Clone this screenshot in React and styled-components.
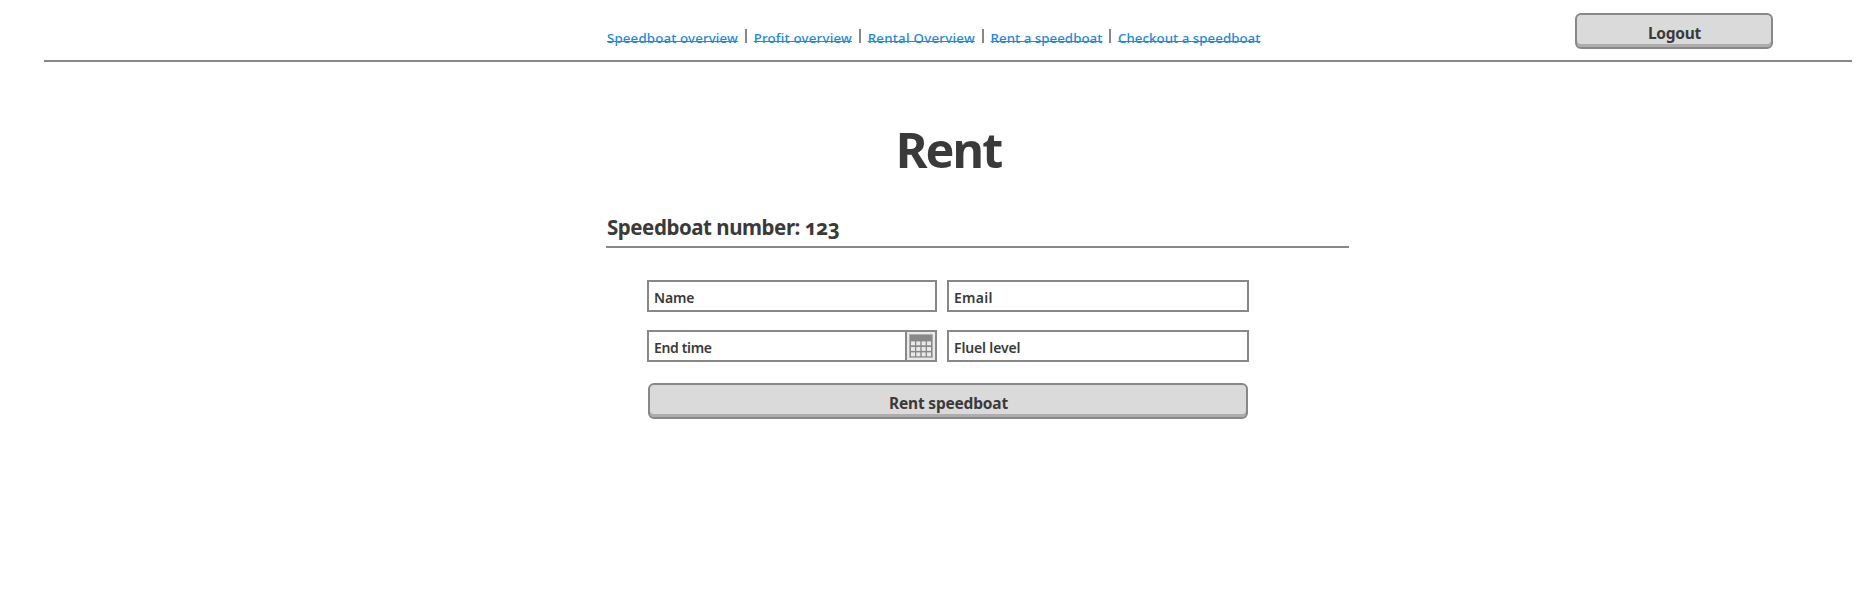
import React from "react";
import styled, { createGlobalStyle } from "styled-components";

const line = "#888888";
const ink = "#3a3a3a";

const GlobalStyle = createGlobalStyle`
  *, *::before, *::after { box-sizing: border-box; }
  body {
    margin: 0;
    background: #fff;
    color: ${ink};
    font-family: "Noto Sans", sans-serif;
    font-size: 14px;
  }
`;

const Page = styled.div`
  min-height: 600px;
  overflow: hidden;
`;

const Header = styled.header`
  display: flex;
  justify-content: space-between;
  align-items: flex-start;
  height: 62px;
  margin: 0 20px 0 44px;
  padding: 13px 79px 0 563px;
  border-bottom: 2px solid ${line};
`;

const Nav = styled.nav`
  display: flex;
  padding-top: 15px;
`;

const NavItem = styled.span`
  display: flex;
`;

const NavLink = styled.a`
  color: #2489dd;
  font-size: 13.3px;
  font-weight: 500;
  line-height: 20px;
  letter-spacing: ${(p) => p.$tracking}px;
  white-space: nowrap;
  text-decoration: underline;
  text-decoration-thickness: 1px;
  text-underline-offset: -2px;
  text-decoration-skip-ink: none;
`;

const Separator = styled.span`
  width: 2px;
  height: 14px;
  margin: 1px 7px 0 6.7px;
  background: ${line};
`;

const Button = styled.button`
  display: block;
  width: ${(p) => p.$width}px;
  height: 36px;
  padding: 4px 0 0 1px;
  border: 2px solid ${line};
  border-radius: 6px;
  background: #dadada;
  box-shadow: inset 0 -3px 0 #adadad;
  color: ${ink};
  font: 700 15.5px/28px "Noto Sans", sans-serif;
  letter-spacing: ${(p) => p.$tracking}px;
  text-align: center;
`;

const Main = styled.main`
  width: 743px;
  margin-left: 606px;
`;

const Title = styled.h1`
  width: 685px;
  margin: 57px 0 0;
  font-size: 48.5px;
  font-weight: 700;
  line-height: 60px;
  letter-spacing: -1.9px;
  text-align: center;
`;

const SectionHeading = styled.h2`
  margin: 33px 0 0;
  padding: 0 0 4px 1px;
  border-bottom: 2px solid ${line};
  font-size: 20.5px;
  font-weight: 700;
  font-variant-numeric: oldstyle-nums;
  line-height: 30px;
  letter-spacing: -0.46px;
`;

const Form = styled.div`
  width: 602px;
  margin: 32px 0 0 41px;
`;

const Fields = styled.div`
  display: grid;
  grid-template-columns: 290px 302px;
  gap: 18px 10px;
`;

const Field = styled.div`
  display: flex;
  justify-content: space-between;
  height: 32px;
  border: 2px solid ${line};
  background: #fff;
`;

const Label = styled.span`
  padding: 3px 0 0 5px;
  font-weight: 600;
  line-height: 25px;
  letter-spacing: ${(p) => p.$tracking}px;
`;

const CalendarButton = styled.span`
  display: flex;
  align-items: center;
  justify-content: center;
  width: 30px;
  border-left: 2px solid ${line};
  background: #e9e9e9;
`;

const Actions = styled.div`
  display: flex;
  justify-content: center;
  margin-top: 21px;
`;

const links = [
  { label: "Speedboat overview", tracking: 0.14 },
  { label: "Profit overview", tracking: 0.2 },
  { label: "Rental Overview", tracking: 0.25 },
  { label: "Rent a speedboat", tracking: 0.03 },
  { label: "Checkout a speedboat", tracking: 0.03 },
];

const fields = [
  { label: "Name", tracking: -0.15 },
  { label: "Email", tracking: 0.25 },
  { label: "End time", tracking: -0.35, calendar: true },
  { label: "Fluel level", tracking: -0.15 },
];

function CalendarIcon() {
  return (
    <svg width="24" height="24" viewBox="0 0 24 24">
      <rect width="24" height="24" fill="#b0b0b0" />
      <rect x="1" y="1" width="22" height="22" fill="#888" />
      {[7.4, 13, 18.4].map((y) =>
        [2, 7.3, 12.7, 18].map((x) => (
          <rect key={`${x}-${y}`} x={x} y={y} width="4" height="3.9" fill="#e9e9e9" />
        ))
      )}
    </svg>
  );
}

export default function App() {
  return (
    <Page>
      <GlobalStyle />
      <Header>
        <Nav>
          {links.map((link, i) => (
            <NavItem key={link.label}>
              {i > 0 && <Separator />}
              <NavLink $tracking={link.tracking}>{link.label}</NavLink>
            </NavItem>
          ))}
        </Nav>
        <Button $width={198} $tracking={-0.25}>Logout</Button>
      </Header>
      <Main>
        <Title>Rent</Title>
        <SectionHeading>Speedboat number: 123</SectionHeading>
        <Form>
          <Fields>
            {fields.map((field) => (
              <Field key={field.label}>
                <Label $tracking={field.tracking}>{field.label}</Label>
                {field.calendar && (
                  <CalendarButton>
                    <CalendarIcon />
                  </CalendarButton>
                )}
              </Field>
            ))}
          </Fields>
          <Actions>
            <Button $width={600} $tracking={-0.2}>Rent speedboat</Button>
          </Actions>
        </Form>
      </Main>
    </Page>
  );
}
